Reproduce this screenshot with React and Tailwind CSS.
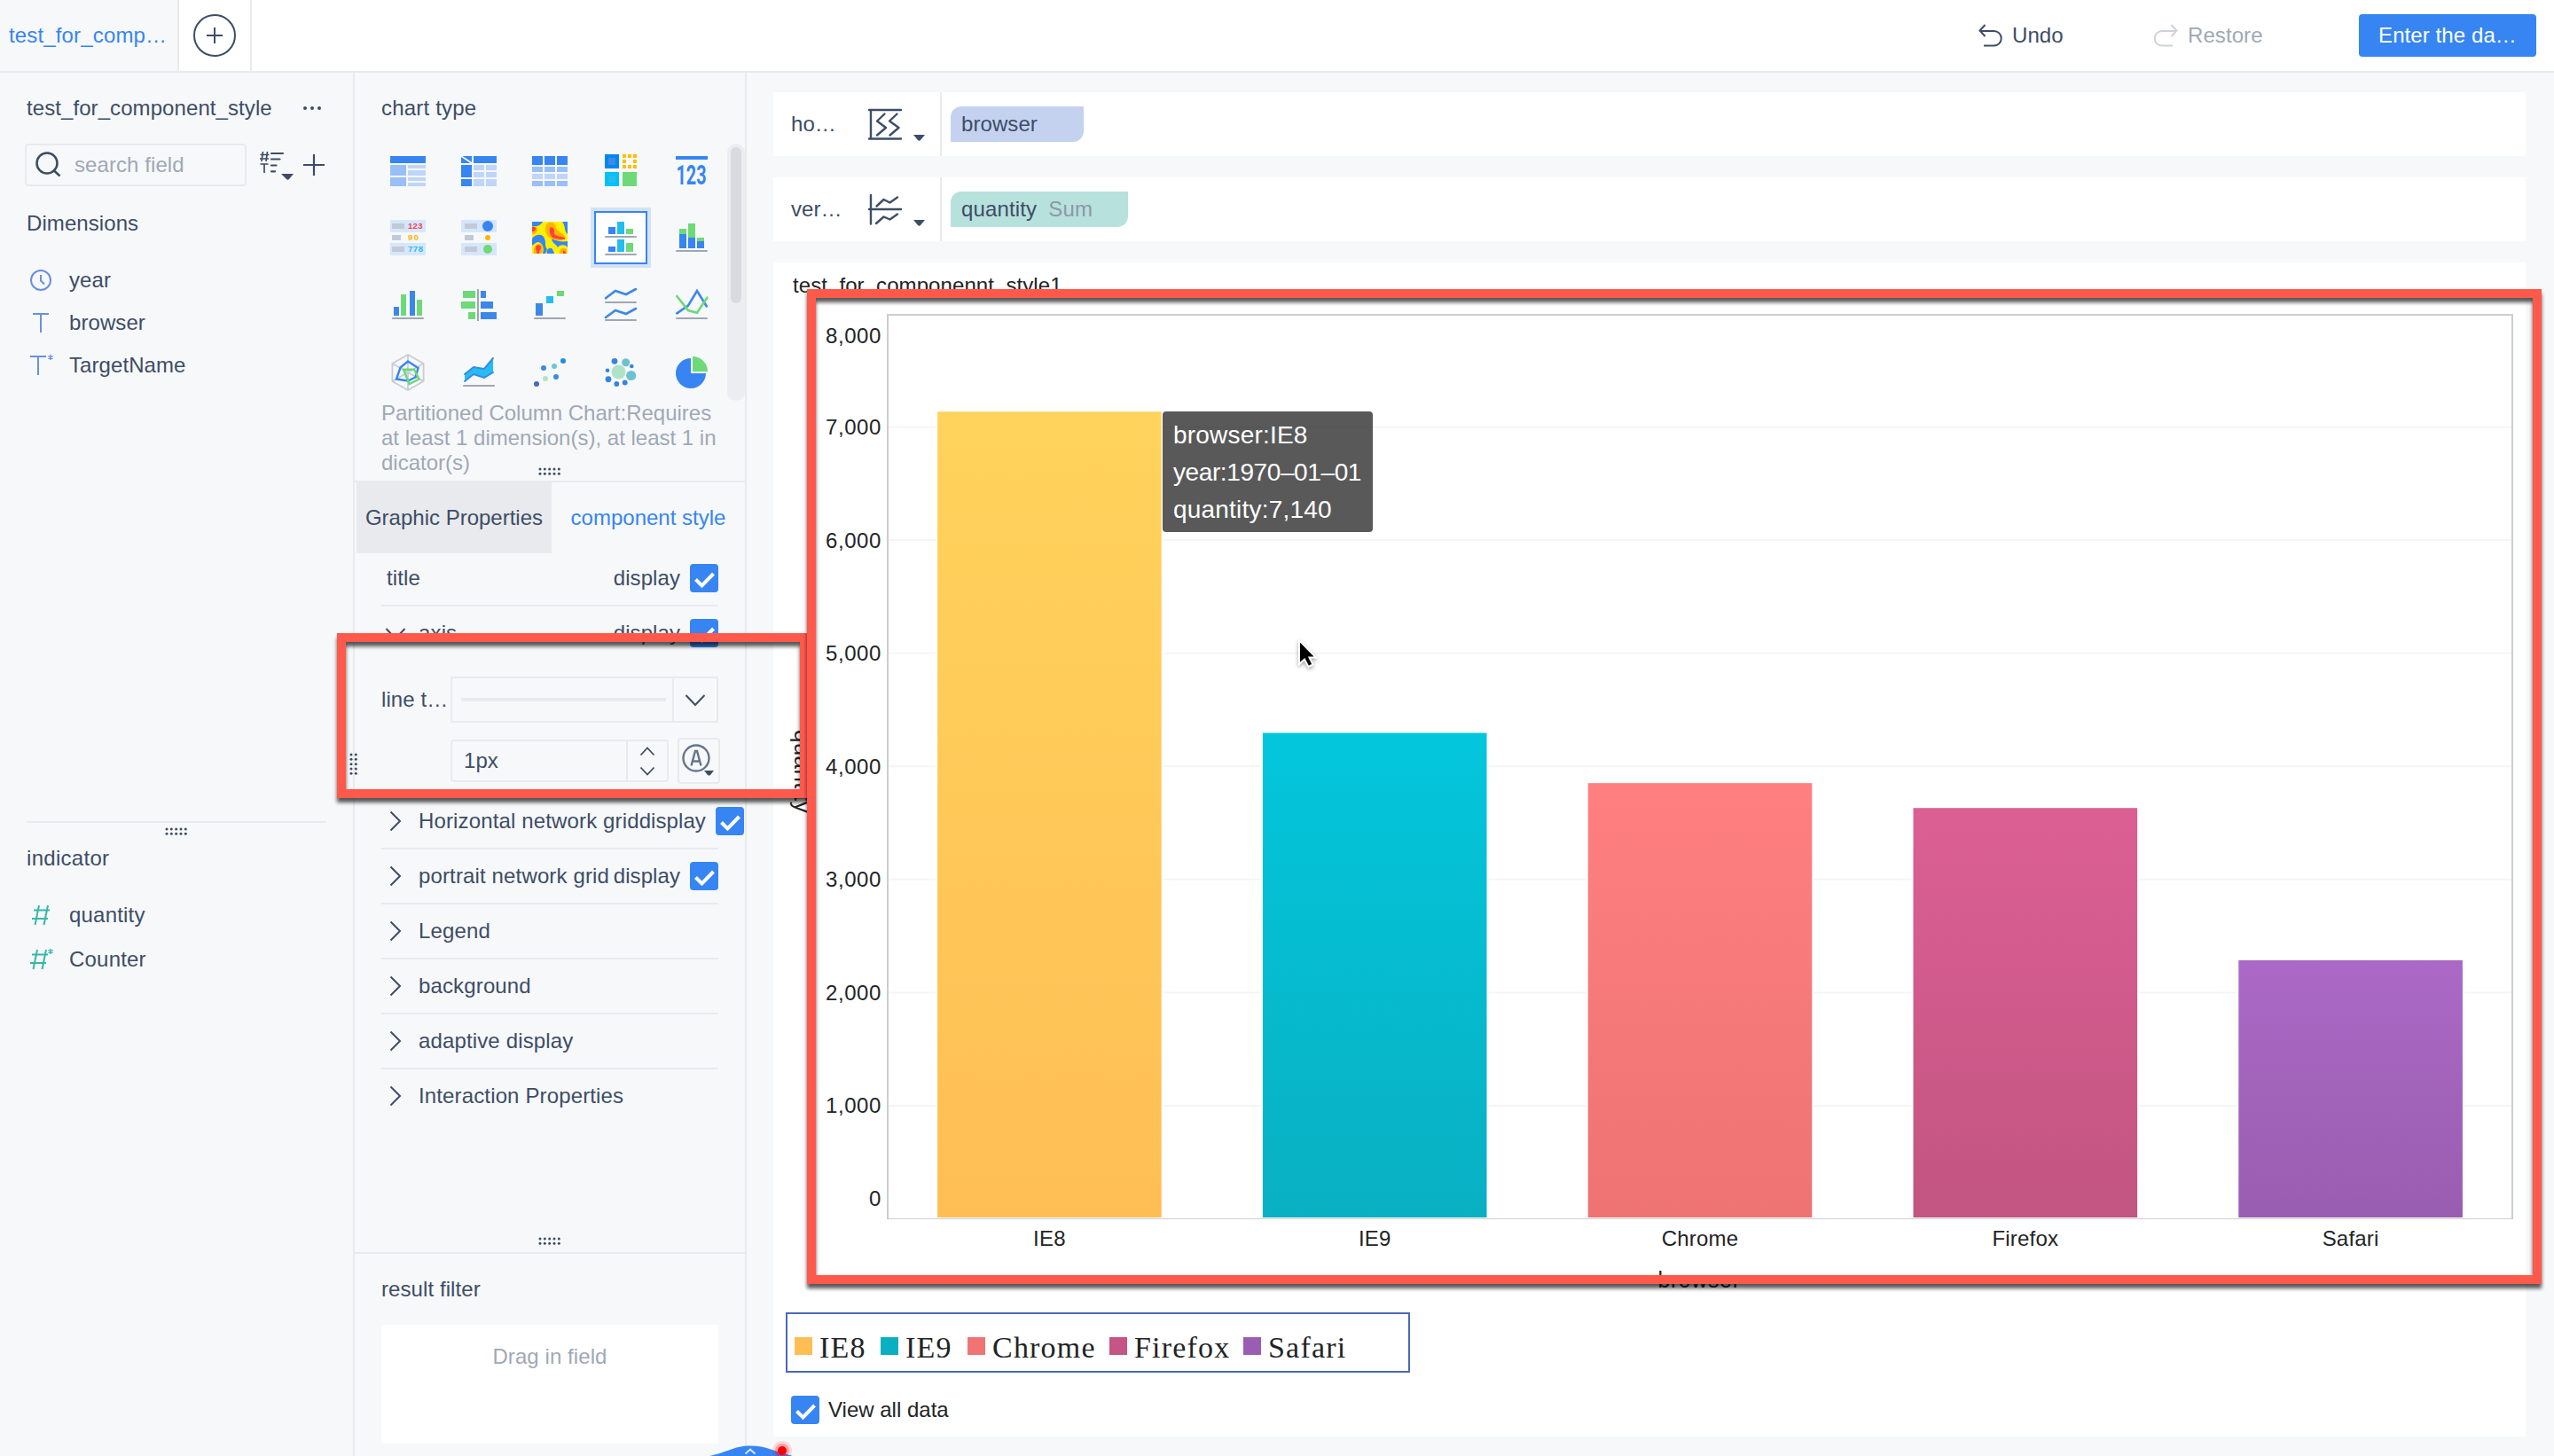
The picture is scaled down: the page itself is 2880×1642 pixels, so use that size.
import React, { useState } from 'react';

const DARK = '#3d4d66';
const BLUE = '#3685f2';
const GREEN = '#6dd977';
const CYAN = '#24bdf0';
const GREY = '#9fa6b5';

/* ---------- small shared pieces ---------- */

const Handle = ({ vertical }) => {
    const long = [2, 7.33, 12.66, 18, 23.33];
    const short = [2, 7.33];
    const dots = long.flatMap((a) => short.map((b) => (vertical ? [b, a] : [a, b])));
    return (
        <svg width={vertical ? 10 : 26} height={vertical ? 26 : 10} fill={DARK}>
            {dots.map(([x, y]) => (
                <circle key={`${x}-${y}`} cx={x} cy={y} r="1.5" />
            ))}
        </svg>
    );
};

const Checkbox = ({ checked, onChange }) => (
    <button
        type="button"
        onClick={onChange}
        className={`w-8 h-8 shrink-0 rounded-[4px] ${checked ? 'bg-[#3685f2]' : 'bg-white border-2 border-[#e8eaed]'}`}
    >
        {checked && (
            <svg width="32" height="32" fill="none" stroke="#fff" strokeWidth="4">
                <path d="M6.5 17.5l7 7L26.5 11" />
            </svg>
        )}
    </button>
);

const Chevron = ({ open }) => (
    <svg width="24" height="24" fill="none" stroke={DARK} strokeWidth="2" className="shrink-0">
        {open ? <path d="M1.5 7L12 18 22.5 7" /> : <path d="M6.5 1.5L17 12 6.5 22.5" />}
    </svg>
);

/* ---------- chart type icons, each on a 40x40 canvas ---------- */

const Base = ({ y = 34 }) => <rect x="2" y={y} width="36" height="2" rx="1" fill={GREY} />;

const Rects = ({ list, fill }) =>
    list.map(([x, y, w, h]) => <rect key={`${x}-${y}`} x={x} y={y} width={w} height={h} fill={fill} />);

const chartTypes = [
    {
        id: 'group-table',
        icon: (
            <>
                <Rects fill={BLUE} list={[[0, 4, 40, 8]]} />
                <Rects fill="#99bff7" list={[[0, 14, 18, 12], [0, 28, 18, 10]]} />
                <Rects fill="#bfd5fa" list={[[20, 14, 20, 4], [20, 20, 20, 6], [20, 28, 20, 4], [20, 34, 20, 4]]} />
            </>
        ),
    },
    {
        id: 'cross-table',
        icon: (
            <>
                <Rects fill={BLUE} list={[[0, 4, 12, 8], [14, 4, 26, 8], [0, 14, 12, 14], [0, 30, 12, 8]]} />
                <path d="M0 4l12 8" stroke="#f7f8fa" strokeWidth="1.6" />
                <Rects
                    fill="#bfd5fa"
                    list={[[14, 14, 12, 6], [28, 14, 12, 6], [14, 22, 12, 6], [28, 22, 12, 6], [14, 30, 12, 8], [28, 30, 12, 8]]}
                />
            </>
        ),
    },
    {
        id: 'detail-table',
        icon: (
            <>
                <Rects fill={BLUE} list={[[0, 4, 12, 10], [14, 4, 12, 10], [28, 4, 12, 10]]} />
                <Rects
                    fill="#99bff7"
                    list={[[0, 16, 12, 6], [14, 16, 12, 6], [28, 16, 12, 6], [0, 32, 12, 6], [14, 32, 12, 6], [28, 32, 12, 6]]}
                />
                <Rects fill="#bfd5fa" list={[[0, 24, 12, 6], [14, 24, 12, 6], [28, 24, 12, 6]]} />
            </>
        ),
    },
    {
        id: 'color-table',
        icon: (
            <>
                <Rects fill="#0088f0" list={[[2, 2, 16, 16]]} />
                <Rects fill="#3d8ae8" list={[[6, 6, 8, 8]]} />
                <Rects fill="#00c0f8" list={[[2, 22, 16, 16]]} />
                <Rects fill={CYAN} list={[[6, 26, 8, 8]]} />
                <Rects
                    fill="#ffbf00"
                    list={[[22, 2, 4, 4], [28, 2, 4, 4], [34, 2, 4, 4], [22, 8, 4, 4], [34, 8, 4, 4], [22, 14, 4, 4], [28, 14, 4, 4], [34, 14, 4, 4]]}
                />
                <Rects fill={GREEN} list={[[22, 22, 16, 16]]} />
            </>
        ),
    },
    {
        id: 'kpi',
        icon: (
            <>
                <Rects fill={BLUE} list={[[2, 4, 36, 4]]} />
                <text x="2.5" y="36" fontSize="31" fontWeight="700" fontFamily="Roboto, sans-serif" textLength="34" lengthAdjust="spacingAndGlyphs" fill={BLUE}>
                    123
                </text>
            </>
        ),
    },
    {
        id: 'kpi-card',
        icon: (
            <>
                <Rects fill="#d6e6fc" list={[[0, 0, 40, 14], [0, 26, 40, 14]]} />
                <Rects fill="#c3c9d6" list={[[2, 4, 14, 6], [2, 17, 10, 6], [2, 30, 14, 6]]} />
                <g fontSize="9.5" fontWeight="700">
                    <text x="20" y="10" textLength="16.5" fill="#f53f46">123</text>
                    <text x="20" y="23" textLength="12" fill="#ffb300">90</text>
                    <text x="20" y="36" textLength="17" fill={CYAN}>778</text>
                </g>
            </>
        ),
    },
    {
        id: 'dot-card',
        icon: (
            <>
                <Rects fill="#d6e6fc" list={[[0, 0, 40, 14], [0, 26, 40, 14]]} />
                <Rects fill="#c3c9d6" list={[[4, 4, 14, 6], [4, 17, 10, 6], [4, 30, 14, 6]]} />
                <circle cx="30" cy="7" r="6" fill={BLUE} />
                <circle cx="30" cy="20" r="3" fill="#ffb300" />
                <circle cx="30" cy="33" r="5" fill={GREEN} />
            </>
        ),
    },
    {
        id: 'heat-map',
        icon: (
            <>
                <Rects fill="#fff000" list={[[0, 2, 40, 36]]} />
                <path d="M0 2h12c-2 4-6 6-12 5zM34 2h6v14c-4-3-2-9-6-14zM0 21c4-5 12-6 14 0 2 5 0 9 3 12l-2 5h-3c2-6 0-12-5-13-3 0-5 3-7 4zM17 38c-2-5 4-8 6-5 1 2 2 4 2 5zM22 21c6 3 12 4 18 3v7c-3-4-9-3-11 0-2-4-7-5-7-10z" fill={BLUE} />
                <path d="M17 4c5-3 10 0 10 5 2 4 8 6 11 11-4 6-16 3-20-2-4-4-4-11-1-14zM0 8c4-1 7 1 6 4s-3 4-6 4zM2 38c-1-6 2-11 6-11s5 6 3 11zM31 38c-1-5 4-8 8-5v5z" fill="#ffb300" />
                <path d="M20 9c2-2 5 0 5 3 0 2-1 4 3 6l9 2v2c-6 0-12 0-15-3-2-3-3-7-2-10zM0 8c3-1 5 1 4 3s-2 2-4 2zM4 31c1-4 6-3 6 0 0 2-2 3-2 7H5c1-3-1-4-1-7zM35 35c2-1 3 1 3 3h-3z" fill="#ff4040" />
            </>
        ),
    },
    {
        id: 'partitioned-column',
        icon: (
            <>
                <Rects fill={BLUE} list={[[6, 8, 8, 8], [6, 30, 8, 6]]} />
                <Rects fill={CYAN} list={[[16, 2, 8, 14], [16, 22, 8, 14]]} />
                <Rects fill={GREEN} list={[[26, 10, 8, 6], [26, 26, 8, 10]]} />
                <Base y={18} />
                <Base y={38} />
            </>
        ),
    },
    {
        id: 'stacked-column',
        icon: (
            <>
                <Rects fill={GREEN} list={[[6, 10, 8, 6], [16, 4, 8, 16], [26, 20, 8, 4]]} />
                <Rects fill={BLUE} list={[[6, 16, 8, 16], [16, 20, 8, 12], [26, 24, 8, 8]]} />
                <Base />
            </>
        ),
    },
    {
        id: 'multi-column',
        icon: (
            <>
                <Rects fill="#3d87e8" list={[[4, 22, 6, 10], [22, 4, 6, 28]]} />
                <Rects fill={GREEN} list={[[12, 8, 6, 24], [30, 14, 6, 18]]} />
                <Base />
            </>
        ),
    },
    {
        id: 'compare-bar',
        icon: (
            <>
                <Rects fill={GREEN} list={[[2, 4, 14, 8], [0, 16, 16, 8], [8, 28, 8, 8]]} />
                <Rects fill="#3d87e8" list={[[22, 4, 6, 8], [22, 16, 14, 8], [22, 28, 18, 8]]} />
                <Rects fill={GREY} list={[[18, 2, 2, 36]]} />
            </>
        ),
    },
    {
        id: 'waterfall',
        icon: (
            <>
                <Rects fill="#3d87e8" list={[[4, 18, 8, 14]]} />
                <Rects fill={CYAN} list={[[16, 10, 8, 8]]} />
                <Rects fill={GREEN} list={[[28, 4, 8, 6]]} />
                <Base />
            </>
        ),
    },
    {
        id: 'partitioned-line',
        icon: (
            <>
                <g fill="none" stroke="#3d87e8" strokeWidth="2.6" strokeLinecap="round">
                    <path d="M3 12.3L14 4l12 4 11-6" />
                    <path d="M3 34l11-8 12 4 11-6" />
                </g>
                <Base y={16} />
                <Base y={36} />
            </>
        ),
    },
    {
        id: 'multi-line',
        icon: (
            <>
                <g fill="none" strokeWidth="2.6" strokeLinecap="round">
                    <path d="M3.3 29.3L16 20.7 26 4l10.7 17.3" stroke="#3d87e8" />
                    <path d="M3.3 10L16 26l10 2.7 11.3-17" stroke={GREEN} />
                </g>
                <Base />
            </>
        ),
    },
    {
        id: 'radar',
        icon: (
            <>
                <path d="M20 0l17.6 10v20L20 40 2.4 30V10zM20 0v40M2.4 10l35.2 20M37.6 10L2.4 30" fill="none" stroke="#c9ccd4" strokeWidth="1.8" />
                <path d="M20 7.5l11.5 7.5-3 10.5L20 29.5 7 27.5l4.5-13z" fill="none" stroke={BLUE} strokeWidth="2.4" />
                <path d="M15 16.7h12L32.5 27.5l-11 5.5z" fill="none" stroke={GREEN} strokeWidth="2.4" />
            </>
        ),
    },
    {
        id: 'area',
        icon: (
            <>
                <path d="M4 22l10-8 12 2L36 4v16l-10 6-12-4-10 8z" fill={CYAN} />
                <path d="M4 22l10-8 12 2L36 4M4 30l10-8 12 4 10-6" fill="none" stroke="#3d87e8" strokeWidth="2" strokeLinecap="round" />
                <Base />
            </>
        ),
    },
    {
        id: 'scatter',
        icon: (
            <>
                <circle cx="5" cy="33" r="3" fill="#4469b8" />
                <circle cx="15" cy="27" r="3" fill="#b0e3c8" />
                <circle cx="27" cy="25" r="3" fill="#3d87e8" />
                <circle cx="13" cy="15" r="3" fill="#3d87e8" />
                <circle cx="25" cy="13" r="3" fill="#6cc5d3" />
                <circle cx="35" cy="7" r="3" fill="#1a90e0" />
            </>
        ),
    },
    {
        id: 'bubble',
        icon: (
            <>
                <circle cx="17.5" cy="19.5" r="8" fill="#afe3c8" />
                <g fill="#3685dd">
                    <circle cx="13" cy="7.3" r="3.4" />
                    <circle cx="32.3" cy="13" r="2.3" />
                    <circle cx="5" cy="17.7" r="2.3" />
                    <circle cx="6" cy="27.7" r="3.4" />
                    <circle cx="15.3" cy="33" r="2.9" />
                    <circle cx="24.7" cy="31.5" r="2.9" />
                </g>
                <g fill="#6cc2cf">
                    <circle cx="25.7" cy="8.7" r="4.5" />
                    <circle cx="31.7" cy="23.5" r="5.6" />
                </g>
            </>
        ),
    },
    {
        id: 'pie',
        icon: (
            <>
                <path d="M19 21V4a17 17 0 1 0 17 17z" fill={BLUE} />
                <path d="M21 19V2a17 17 0 0 1 17 17z" fill={GREEN} />
            </>
        ),
    },
];

/* ---------- header ---------- */

const Header = () => (
    <header className="h-[82px] shrink-0 flex bg-white border-b-2 border-[#e8eaed]">
        <div className="w-[202px] pl-[10px] flex items-center bg-[#f7f8fa] border-r-2 border-[#e8eaed] text-[#3685f2] tracking-[0.15px]">
            test_for_comp…
        </div>
        <div className="w-[82px] flex items-center justify-center border-r-2 border-[#e8eaed]">
            <svg width="48" height="48" fill="none" stroke={DARK} strokeWidth="2">
                <circle cx="24" cy="24" r="23" />
                <path d="M24 15v18M15 24h18" />
            </svg>
        </div>
        <div className="ml-auto pr-5 flex items-center">
            <button type="button" className="w-[198px] flex items-center gap-[11px]">
                <svg width="28" height="28" fill="none" stroke={DARK} strokeWidth="2">
                    <path d="M8.5 2l-6 6.5 6 6.5M3 9h15.5a8 8 0 0 1 0 16.5H7" />
                </svg>
                Undo
            </button>
            <button type="button" className="w-[232px] flex items-center gap-[11px] text-[#9fa8b6]">
                <svg width="28" height="28" fill="none" stroke="#ced2d9" strokeWidth="2">
                    <path d="M20.5 2l6 6.5-6 6.5M26 9H10a8 8 0 0 0 0 16.5h12" />
                </svg>
                Restore
            </button>
            <button type="button" className="w-[200px] h-12 rounded-[4px] bg-[#3685f2] text-white">
                Enter the da…
            </button>
        </div>
    </header>
);

/* ---------- left column: fields ---------- */

const tPath = 'M3 4h18M12 4v21';
const hashPath = 'M10.5 3L6 25M20.5 3L16 25M4.5 8.5h18M2.5 18h18';

const dimensions = [
    { name: 'year', icon: <><circle cx="14" cy="14" r="11" /><path d="M14 8v6.5l4 4" /></> },
    { name: 'browser', icon: <path d="M5 4h18M14 4v21" /> },
    { name: 'TargetName', icon: <path d={tPath} transform="translate(-1)" />, star: true },
];

const indicators = [
    { name: 'quantity', icon: <path d={hashPath} transform="translate(1.5)" /> },
    { name: 'Counter', icon: <path d={hashPath} transform="translate(-.5)" />, star: true },
];

const FieldIcon = ({ color, star, children }) => (
    <svg width="32" height="28" fill="none" stroke={color} strokeWidth="2">
        {children}
        {star && <path d="M25 2v6M22.3 3.5l5.4 3M27.7 3.5l-5.4 3" strokeWidth="1.4" />}
    </svg>
);

const FieldPanel = () => {
    const [keyword, setKeyword] = useState('');
    const match = (f) => f.name.toLowerCase().includes(keyword.toLowerCase());

    return (
        <aside className="w-[400px] shrink-0 border-r-2 border-[#e8eaed]">
            <div className="h-[844px]">
                <div className="h-20 pl-[30px] pr-[34px] flex items-center justify-between">
                    test_for_component_style
                    <svg width="24" height="6" fill={DARK}>
                        <circle cx="4" cy="3" r="2" />
                        <circle cx="12" cy="3" r="2" />
                        <circle cx="20" cy="3" r="2" />
                    </svg>
                </div>

                <div className="pl-7 flex items-center">
                    <div className="w-[250px] h-12 pl-[10px] flex items-center border-2 border-[#e8eaed] rounded-[4px]">
                        <svg width="30" height="30" fill="none" stroke={DARK} strokeWidth="2.5">
                            <circle cx="13" cy="13" r="11.5" />
                            <path d="M20 20.5l7.5 7" />
                        </svg>
                        <input
                            value={keyword}
                            onChange={(e) => setKeyword(e.target.value)}
                            placeholder="search field"
                            className="w-[180px] ml-[14px] outline-none placeholder:text-[#9fa8b6]"
                        />
                    </div>
                    <svg width="40" height="38" fill="none" stroke={DARK} strokeWidth="2" className="ml-[14px] mt-[2px]">
                        <path d="M4.5 3L3 14M9.5 3L8 14M1.5 6.5h10M1 11h10M1.5 17h9M6 17v10" strokeWidth="1.7" />
                        <path d="M14 5h13M14 11.5h9.5M14 18.5h5.5M14 25.3h4" strokeLinecap="round" strokeWidth="2.2" />
                        <path d="M25 28h14l-5 6q-1.5 1.5-3 0z" fill={DARK} stroke="none" />
                    </svg>
                    <svg width="26" height="26" stroke={DARK} strokeWidth="2.2" className="ml-[9px]">
                        <path d="M13 1v24M1 13h24" />
                    </svg>
                </div>

                <div className="h-[82px] pt-[2px] pl-[30px] flex items-center">Dimensions</div>
                {dimensions.filter(match).map((f) => (
                    <div key={f.name} className="h-12 pl-8 flex items-center gap-[14px]">
                        <FieldIcon color="#6a8fdf" star={f.star}>{f.icon}</FieldIcon>
                        {f.name}
                    </div>
                ))}
            </div>

            <div className="ml-[30px] w-[338px] border-t-2 border-[#e8eaed] pt-[5px] flex justify-center">
                <Handle />
            </div>
            <div className="h-[50px] pl-[30px] flex items-center tracking-[0.3px]">indicator</div>
            <div className="pt-[14px]">
                {indicators.filter(match).map((f) => (
                    <div key={f.name} className="h-[50px] pl-8 flex items-center gap-[14px] tracking-[0.2px]">
                        <FieldIcon color="#36b7a9" star={f.star}>{f.icon}</FieldIcon>
                        {f.name}
                    </div>
                ))}
            </div>
        </aside>
    );
};

/* ---------- middle column: chart type and style ---------- */

const StyleRow = ({ label, open, plain, display, last, onToggle }) => {
    const [checked, setChecked] = useState(true);
    return (
        <div className={`w-[380px] h-[62px] ml-[30px] flex items-center border-b-2 ${last || open ? 'border-transparent' : 'border-[#e8eaed]'}`}>
            <button
                type="button"
                onClick={onToggle}
                className={`flex items-center whitespace-nowrap tracking-[0.14px] ${plain ? 'pl-[6px]' : 'pl-1 gap-[14px]'}`}
            >
                {!plain && <Chevron open={open} />}
                {label}
            </button>
            {display && (
                <div className="ml-auto flex items-center gap-[11px]">
                    display
                    <Checkbox checked={checked} onChange={() => setChecked(!checked)} />
                </div>
            )}
        </div>
    );
};

const AxisSettings = () => (
    <div className="h-[150px] ml-[30px] pt-[17px]">
        <div className="flex items-center">
            <div className="w-[78px] whitespace-nowrap">line t…</div>
            <div className="w-[302px] h-[52px] flex border-2 border-[#e8eaed]">
                <div className="w-[250px] pl-[10px] pr-[7px] flex items-center border-r-2 border-[#e8eaed]">
                    <div className="w-full h-1 bg-[#e8eaed]" />
                </div>
                <div className="flex-1 flex items-center justify-center">
                    <Chevron open />
                </div>
            </div>
        </div>
        <div className="mt-[17px] pl-[78px] flex items-center gap-[10px]">
            <div className="w-[246px] h-12 flex border-2 border-[#e8eaed] rounded-[4px]">
                <div className="w-[198px] pl-[13px] flex items-center border-r-2 border-[#e8eaed]">1px</div>
                <div className="flex-1 flex items-center justify-center">
                    <svg width="18" height="36" fill="none" stroke={DARK} strokeWidth="1.8">
                        <path d="M1.5 11.5L9 3.5l7.5 8M1.5 25.5l7.5 8 7.5-8" />
                    </svg>
                </div>
            </div>
            <div className="w-12 h-[52px] border-2 border-[#e8eaed] rounded-[4px]">
                <svg width="44" height="48" fill="none" stroke="#64748b" strokeWidth="2.4">
                    <circle cx="19" cy="21" r="14.5" />
                    <path d="M13.5 29.5L18 13h2l4.5 16.5M15 24.5h8" />
                    <path d="M28 35h11l-4 5q-1.5 1-3 0z" fill={DARK} stroke="none" />
                </svg>
            </div>
        </div>
    </div>
);

const StylePanel = () => {
    const [selected, setSelected] = useState('partitioned-column');
    const [axisOpen, setAxisOpen] = useState(true);

    return (
        <section className="w-[442px] shrink-0 border-r-2 border-[#e8eaed] flex flex-col">
            {/* CHART TYPE */}
            <div className="h-[462px] border-b-2 border-[#e8eaed]">
                <div className="h-20 pl-[30px] flex items-center tracking-[0.2px]">chart type</div>
                <div className="h-[290px] flex">
                    <div className="w-[420px] h-[304px] -mt-2 pl-5 grid grid-cols-5">
                        {chartTypes.map((t) => (
                            <button
                                key={t.id}
                                type="button"
                                onClick={() => setSelected(t.id)}
                                className="h-[76px] flex items-center justify-center"
                            >
                                <span
                                    className={
                                        selected === t.id
                                            ? 'w-[60px] h-[60px] flex items-center justify-center bg-white border-2 border-[#3685f2] ring-4 ring-[#d3e2f7]'
                                            : 'w-[60px] h-[60px] flex items-center justify-center'
                                    }
                                >
                                    <svg width="40" height="40" className="shrink-0 overflow-visible tracking-normal">{t.icon}</svg>
                                </span>
                            </button>
                        ))}
                    </div>
                    <div className="w-5 h-[290px] p-1 rounded-full bg-[#ecedf1]">
                        <div className="h-[176px] rounded-full bg-[#d8dadf]" />
                    </div>
                </div>
                <p className="w-[380px] h-[84px] ml-[30px] leading-[28px] tracking-normal break-all text-[#9fa8b6]">
                    Partitioned Column Chart:Requires at least 1 dimension(s), at least 1 indicator(s)
                </p>
                <div className="-mt-[9px] flex justify-center">
                    <Handle />
                </div>
            </div>

            {/* TABS */}
            <div className="h-[78px] shrink-0 pl-[2px] flex tracking-normal">
                <button type="button" className="w-[220px] h-20 shrink-0 bg-[#e8eaed]">Graphic Properties</button>
                <button type="button" className="w-[218px] h-20 shrink-0 text-[#3685f2]">component style</button>
            </div>

            {/* PROPERTIES */}
            <StyleRow label="title" plain display />
            <div className="h-[728px] flex flex-col">
                <StyleRow label="axis" open={axisOpen} display onToggle={() => setAxisOpen(!axisOpen)} />
                {axisOpen && <AxisSettings />}
                <StyleRow label="Horizontal network grid" display />
                <StyleRow label="portrait network grid" display />
                <StyleRow label="Legend" />
                <StyleRow label="background" />
                <StyleRow label="adaptive display" />
                <StyleRow label="Interaction Properties" last />
                <div className="mt-auto pb-[7px] flex justify-center">
                    <Handle />
                </div>
            </div>

            {/* FILTER */}
            <div className="flex-1 border-t-2 border-[#e8eaed]">
                <div className="h-20 pl-[30px] flex items-center">result filter</div>
                <div className="w-[380px] h-[134px] ml-[30px] pt-[21px] bg-white text-center text-[#9fa8b6]">
                    Drag in field
                </div>
            </div>
        </section>
    );
};

/* ---------- right side: axes fields and the chart ---------- */

const AxisField = ({ label, icon, children }) => (
    <div className="h-[72px] flex bg-white">
        <div className="w-[190px] pl-[20px] flex items-center border-r-2 border-[#e8eaed]">
            <div className="w-[86px]">{label}</div>
            <svg width="66" height="40" fill="none" stroke={DARK} strokeWidth="2.4" strokeLinecap="round" strokeLinejoin="round">
                {icon}
                <path d="M52 32h13l-5 6q-1.5 1.5-3 0z" fill={DARK} stroke="none" />
            </svg>
        </div>
        <div className="pl-[10px] flex items-center">{children}</div>
    </div>
);

const series = [
    { name: 'IE8', value: 7128, from: '#ffd35c', to: '#ffbe54', color: '#ffbe54', width: 'w-[97px]' },
    { name: 'IE9', value: 4288, from: '#03c6dc', to: '#09b0c2', color: '#09b0c2', width: 'w-[98px]' },
    { name: 'Chrome', value: 3844, from: '#ff7f80', to: '#ee7373', color: '#f07474', width: 'w-[160px]' },
    { name: 'Firefox', value: 3624, from: '#dc5f94', to: '#c25581', color: '#c45584', width: 'w-[151px]' },
    { name: 'Safari', value: 2278, from: '#ab69c6', to: '#995db0', color: '#9a5db2', width: 'w-[130px]' },
];

const PLOT = { left: 128, top: 15, width: 1834, height: 1020.5, max: 8000 };
const yOf = (v) => PLOT.top + PLOT.height - (v / PLOT.max) * PLOT.height;
const step = PLOT.width / series.length;
const barWidth = 252.6;
const ticks = [0, 1000, 2000, 3000, 4000, 5000, 6000, 7000, 8000];

// first and last labels are pulled inside the plot
const labelY = (v) => {
    if (v === 0) return yOf(v) - 15;
    if (v === PLOT.max) return yOf(v) + 33;
    return yOf(v) + 8.5;
};

const ColumnChart = () => (
    <svg width="1976" height="1130" fontSize="24" fill="#222426" className="block">
        <defs>
            {series.map((s) => (
                <linearGradient key={s.name} id={`bar-${s.name}`} x1="0" y1="0" x2="0" y2="1">
                    <stop offset="0" stopColor={s.from} />
                    <stop offset="1" stopColor={s.to} />
                </linearGradient>
            ))}
        </defs>

        {ticks.slice(1, -1).map((v) => (
            <rect key={v} x={PLOT.left + 2} y={yOf(v) - 1} width={PLOT.width - 4} height="2" fill="#f4f5f6" />
        ))}
        {ticks.map((v) => (
            <text key={v} x="122" y={labelY(v)} textAnchor="end" letterSpacing=".6">
                {v.toLocaleString('en-US')}
            </text>
        ))}

        <rect x={PLOT.left} y="15" width="1834" height="2" fill="#cccdce" />
        <rect x={PLOT.left} y="15" width="2" height="1021" fill="#cccdce" />
        <rect x="1960" y="15" width="2" height="1021" fill="#cccdce" />
        <rect x={PLOT.left} y="1035" width="1834" height="1" fill="#cccdce" />

        {series.map((s, i) => {
            const mid = PLOT.left + step * (i + 0.5);
            return (
                <g key={s.name}>
                    <rect x={mid - barWidth / 2 - 2} y={yOf(s.value) - 2} width={barWidth + 4} height={1035 - yOf(s.value) + 2} fill="#fff" />
                    <rect x={mid - barWidth / 2} y={yOf(s.value) - 1} width={barWidth} height={1035 - yOf(s.value)} fill={`url(#bar-${s.name})`} />
                    <text x={mid} y="1066" textAnchor="middle" letterSpacing=".2">
                        {s.name}
                    </text>
                </g>
            );
        })}

        <text x={PLOT.left + PLOT.width / 2 - 1} y="1112.5" fontSize="25" textAnchor="middle" letterSpacing=".6">browser</text>
        <text transform="translate(24 531) rotate(90)" fontSize="26" textAnchor="middle" letterSpacing=".4">quantity</text>
    </svg>
);

const Workspace = () => (
    <main className="flex-1 pt-[22px] pl-[30px] pr-8 flex flex-col">
        <AxisField
            label="ho…"
            icon={<path d="M2 4h36M2 36.5h36M4 4v32M19.5 8.5L11 16.5l10 7.5-10 8.5M33.5 8.5l-8.5 8 10.5 7.5-10 8.5" />}
        >
            <div className="w-[150px] h-10 pl-3 flex items-center rounded-tl-xl rounded-br-xl bg-[#c4d2f0]">browser</div>
        </AxisField>
        <div className="h-6" />
        <AxisField
            label="ver…"
            icon={<path d="M2 20h36M4 4v32.5M10.5 16.5l8-7.5 7 3.5 8.5-6M10 36l8.5-7.5 7 3 8.5-6" />}
        >
            <div className="w-[200px] h-10 pl-3 flex items-center gap-[13px] rounded-tl-xl rounded-br-xl bg-[#b7e1dc] tracking-[0.15px]">
                quantity
                <span className="text-[#8d97a8]">Sum</span>
            </div>
        </AxisField>

        <div className="mt-6 h-[1324px] bg-white text-[#222426]">
            <div className="h-[43px] pl-[22px] pt-[11px]">test_for_componennt_style1</div>
            <ColumnChart />
            <div className="w-[704px] h-[68px] ml-[14px] mt-[11px] pl-2 pt-[6px] flex items-center border-2 border-[#4a69b5] font-['Liberation_Serif',serif] text-[34px] tracking-[1.2px]">
                {series.map((s) => (
                    <div key={s.name} className={`flex items-center gap-2 ${s.width}`}>
                        <span className="w-5 h-5 mt-[2px] shrink-0" style={{ backgroundColor: s.color }} />
                        <span className="pt-[5px]">{s.name}</span>
                    </div>
                ))}
            </div>
            <div className="mt-[26px] ml-5 flex items-center gap-[10px] tracking-normal">
                <Checkbox checked />
                View all data
            </div>
        </div>
    </main>
);

const Tooltip = () => (
    <div className="absolute left-[1311px] top-[464px] w-[237px] h-[136px] pl-[12px] pt-[6px] rounded-[4px] bg-black/65 text-white text-[28px] leading-[42px] whitespace-nowrap">
        <div className="tracking-[0.2px]">browser:IE8</div>
        <div className="tracking-[-0.4px]">year:1970–01–01</div>
        <div className="tracking-[0.2px]">quantity:7,140</div>
    </div>
);

export default function App() {
    return (
        <div className="relative w-[2880px] h-[1642px] overflow-hidden flex flex-col bg-[#f7f8fa] text-[#3d4d66] text-[24px] leading-[30px] tracking-[0.08px] font-['Liberation_Sans',Arial,sans-serif]">
            <Header />
            <div className="flex-1 flex min-h-0">
                <FieldPanel />
                <StylePanel />
                <Workspace />
            </div>

            <div className="absolute left-[394px] top-[849px]">
                <Handle vertical />
            </div>

            <Tooltip />

            {/* mouse pointer */}
            <svg width="30" height="40" className="absolute left-[1461px] top-[719px] drop-shadow-[0_2px_2px_rgba(0,0,0,0.35)]">
                <path d="M4 3v27l6-5.5 4.5 8.5 5-2.5-4-8H23z" fill="#000" stroke="#fff" strokeWidth="2" />
            </svg>

            {/* collapsed drawer at the bottom edge */}
            <svg width="120" height="22" className="absolute left-[790px] bottom-0">
                <path d="M10 22C30 18 38 10.5 56 10.5s28 6.5 48 11.5z" fill={BLUE} />
                <path d="M50.5 19.5l5.5-5 5.5 5" fill="none" stroke="#dbe8fd" strokeWidth="2" />
                <circle cx="92" cy="16" r="11" fill="#f00" opacity=".12" />
                <circle cx="92" cy="16" r="8" fill="#f00" opacity=".25" />
                <circle cx="92" cy="16" r="5" fill="#f00" />
            </svg>

            {/* highlight frames */}
            <div className="absolute left-[380px] top-[714px] w-[532px] h-[186px] border-[10px] border-[#ff594c] drop-shadow-[0_5px_2px_rgba(0,0,0,0.65)]" />
            <div className="absolute left-[910px] top-[326px] w-[1956px] h-[1122px] border-[10px] border-[#ff594c] drop-shadow-[0_5px_2px_rgba(0,0,0,0.65)]" />
        </div>
    );
}
